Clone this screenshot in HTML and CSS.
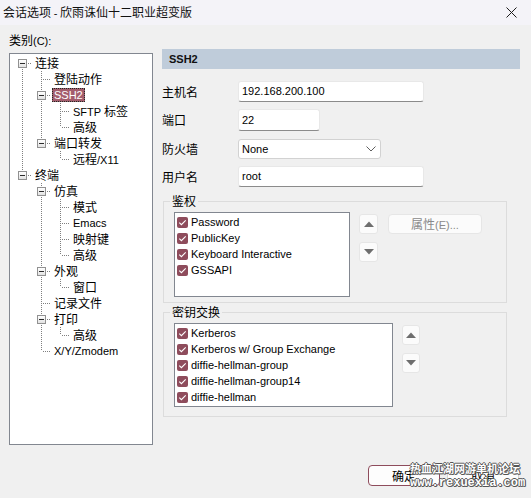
FILE: index.html
```html
<!DOCTYPE html>
<html lang="zh-CN">
<head>
<meta charset="utf-8">
<title>会话选项</title>
<link rel="stylesheet" href="styles.css">
</head>
<body>
<div class="window">
  <div class="titlebar">
    <span class="title">会话选项 <span class="en">-</span> 欣雨诛仙十二职业超变版</span>
    <svg class="close" width="11" height="11" viewBox="0 0 11 11"><path d="M0.5 0.5 L10.5 10.5 M10.5 0.5 L0.5 10.5" stroke="#1c1c1c" stroke-width="1" fill="none"/></svg>
  </div>
  <div class="main">
    <div class="left">
      <div class="cat-label">类别<span class="en">(C):</span></div>
      <div class="tree">
        <div class="row"><span class="c first"><i class="exp"></i></span><span class="lbl">连接</span></div>
        <div class="row"><span class="c pipe"></span><span class="c tee"></span><span class="lbl">登陆动作</span></div>
        <div class="row"><span class="c pipe"></span><span class="c tee"><i class="exp"></i></span><span class="lbl sel en">SSH2</span></div>
        <div class="row"><span class="c pipe"></span><span class="c pipe"></span><span class="c tee"></span><span class="lbl"><span class="en">SFTP </span>标签</span></div>
        <div class="row"><span class="c pipe"></span><span class="c pipe"></span><span class="c ell"></span><span class="lbl">高级</span></div>
        <div class="row"><span class="c pipe"></span><span class="c ell"><i class="exp"></i></span><span class="lbl">端口转发</span></div>
        <div class="row"><span class="c pipe"></span><span class="c"></span><span class="c ell"></span><span class="lbl">远程<span class="en">/X11</span></span></div>
        <div class="row"><span class="c ell"><i class="exp"></i></span><span class="lbl">终端</span></div>
        <div class="row"><span class="c"></span><span class="c tee"><i class="exp"></i></span><span class="lbl">仿真</span></div>
        <div class="row"><span class="c"></span><span class="c pipe"></span><span class="c tee"></span><span class="lbl">模式</span></div>
        <div class="row"><span class="c"></span><span class="c pipe"></span><span class="c tee"></span><span class="lbl en">Emacs</span></div>
        <div class="row"><span class="c"></span><span class="c pipe"></span><span class="c tee"></span><span class="lbl">映射键</span></div>
        <div class="row"><span class="c"></span><span class="c pipe"></span><span class="c ell"></span><span class="lbl">高级</span></div>
        <div class="row"><span class="c"></span><span class="c tee"><i class="exp"></i></span><span class="lbl">外观</span></div>
        <div class="row"><span class="c"></span><span class="c pipe"></span><span class="c ell"></span><span class="lbl">窗口</span></div>
        <div class="row"><span class="c"></span><span class="c tee"></span><span class="lbl">记录文件</span></div>
        <div class="row"><span class="c"></span><span class="c tee"><i class="exp"></i></span><span class="lbl">打印</span></div>
        <div class="row"><span class="c"></span><span class="c pipe"></span><span class="c ell"></span><span class="lbl">高级</span></div>
        <div class="row"><span class="c"></span><span class="c ell"></span><span class="lbl en">X/Y/Zmodem</span></div>
      </div>
    </div>
    <div class="right">
      <div class="header en">SSH2</div>
      <div class="form-row r1"><span class="flabel">主机名</span><div class="field w-long">192.168.200.100</div></div>
      <div class="form-row r2"><span class="flabel">端口</span><div class="field w-port">22</div></div>
      <div class="form-row r3"><span class="flabel">防火墙</span>
        <div class="combo"><span>None</span>
          <svg width="10" height="6" viewBox="0 0 10 6"><path d="M0.5 0.5 L5 5 L9.5 0.5" stroke="#5f5f5f" stroke-width="1" fill="none"/></svg>
        </div>
      </div>
      <div class="form-row r4"><span class="flabel">用户名</span><div class="field w-long">root</div></div>

      <fieldset class="group g1">
        <legend>鉴权</legend>
        <div class="gbody">
          <div class="list l1">
            <div class="item"><span class="chk"><svg width="11" height="11" viewBox="0 0 11 11"><path d="M2.3 5.6 L4.4 7.7 L8.7 3.3" stroke="#fff" stroke-width="1.1" fill="none"/></svg></span>Password</div>
            <div class="item"><span class="chk"><svg width="11" height="11" viewBox="0 0 11 11"><path d="M2.3 5.6 L4.4 7.7 L8.7 3.3" stroke="#fff" stroke-width="1.1" fill="none"/></svg></span>PublicKey</div>
            <div class="item"><span class="chk"><svg width="11" height="11" viewBox="0 0 11 11"><path d="M2.3 5.6 L4.4 7.7 L8.7 3.3" stroke="#fff" stroke-width="1.1" fill="none"/></svg></span>Keyboard Interactive</div>
            <div class="item"><span class="chk"><svg width="11" height="11" viewBox="0 0 11 11"><path d="M2.3 5.6 L4.4 7.7 L8.7 3.3" stroke="#fff" stroke-width="1.1" fill="none"/></svg></span>GSSAPI</div>
          </div>
          <div class="arrows">
            <div class="abtn"><svg width="10" height="6" viewBox="0 0 10 6"><path d="M0 6 L5 0.5 L10 6 Z" fill="#6e6e6e"/></svg></div>
            <div class="abtn"><svg width="10" height="6" viewBox="0 0 10 6"><path d="M0 0 L5 5.5 L10 0 Z" fill="#6e6e6e"/></svg></div>
          </div>
          <div class="prop">属性<span class="en">(E)...</span></div>
        </div>
      </fieldset>

      <fieldset class="group g2">
        <legend>密钥交换</legend>
        <div class="gbody">
          <div class="list l2">
            <div class="item"><span class="chk"><svg width="11" height="11" viewBox="0 0 11 11"><path d="M2.3 5.6 L4.4 7.7 L8.7 3.3" stroke="#fff" stroke-width="1.1" fill="none"/></svg></span>Kerberos</div>
            <div class="item"><span class="chk"><svg width="11" height="11" viewBox="0 0 11 11"><path d="M2.3 5.6 L4.4 7.7 L8.7 3.3" stroke="#fff" stroke-width="1.1" fill="none"/></svg></span>Kerberos w/ Group Exchange</div>
            <div class="item"><span class="chk"><svg width="11" height="11" viewBox="0 0 11 11"><path d="M2.3 5.6 L4.4 7.7 L8.7 3.3" stroke="#fff" stroke-width="1.1" fill="none"/></svg></span>diffie-hellman-group</div>
            <div class="item"><span class="chk"><svg width="11" height="11" viewBox="0 0 11 11"><path d="M2.3 5.6 L4.4 7.7 L8.7 3.3" stroke="#fff" stroke-width="1.1" fill="none"/></svg></span>diffie-hellman-group14</div>
            <div class="item"><span class="chk"><svg width="11" height="11" viewBox="0 0 11 11"><path d="M2.3 5.6 L4.4 7.7 L8.7 3.3" stroke="#fff" stroke-width="1.1" fill="none"/></svg></span>diffie-hellman</div>
          </div>
          <div class="arrows a2">
            <div class="abtn"><svg width="10" height="6" viewBox="0 0 10 6"><path d="M0 6 L5 0.5 L10 6 Z" fill="#6e6e6e"/></svg></div>
            <div class="abtn"><svg width="10" height="6" viewBox="0 0 10 6"><path d="M0 0 L5 5.5 L10 0 Z" fill="#6e6e6e"/></svg></div>
          </div>
        </div>
      </fieldset>
    </div>
  </div>
  <div class="footer">
    <div class="btn default">确定</div>
    <div class="btn">取消</div>
  </div>
  <div class="watermark">
    <div class="wm1">热血江湖网游单机论坛</div>
    <div class="wm2">www.rexuexia.com</div>
  </div>
</div>
</body>
</html>
```

FILE: styles.css
```css
* { box-sizing: border-box; }
html, body { margin: 0; padding: 0; }
body {
  width: 531px;
  height: 498px;
  overflow: hidden;
  background: #f0f0f0;
  font-family: "Noto Sans CJK SC", "Noto Sans", sans-serif;
  font-size: 12px;
  color: #000;
}
.en { font-family: "Liberation Sans", Arial, sans-serif; font-size: 11px; }
.window { position: relative; width: 531px; height: 498px; }

.titlebar {
  height: 25px;
  background: #f4f3f8;
  display: flex;
  align-items: center;
  justify-content: space-between;
  padding: 0 14px 0 3px;
}
.title { line-height: 16px; color: #111; }
.close { display: block; }

.main { display: flex; padding-left: 9px; }
.left { width: 144px; }
.cat-label { margin-top: 8px; line-height: 14px; height: 14px; }
.tree {
  margin-top: 6px;
  height: 392px;
  background: #fff;
  border: 1px solid #828790;
  padding: 1px 0 0 3px;
}
.row { display: flex; height: 16px; align-items: center; }
.c { flex: none; width: 19px; height: 16px; align-self: stretch; }
.pipe {
  background: repeating-linear-gradient(to bottom, #7f7f7f 0 1px, transparent 1px 2px) 9px 0 / 1px 16px no-repeat;
}
.tee {
  background:
    repeating-linear-gradient(to bottom, #7f7f7f 0 1px, transparent 1px 2px) 9px 0 / 1px 16px no-repeat,
    repeating-linear-gradient(to right, #7f7f7f 0 1px, transparent 1px 2px) 11px 8px / 8px 1px no-repeat;
}
.ell {
  background:
    repeating-linear-gradient(to bottom, #7f7f7f 0 1px, transparent 1px 2px) 9px 0 / 1px 8px no-repeat,
    repeating-linear-gradient(to right, #7f7f7f 0 1px, transparent 1px 2px) 11px 8px / 8px 1px no-repeat;
}
.first {
  background:
    repeating-linear-gradient(to bottom, #7f7f7f 0 1px, transparent 1px 2px) 9px 8px / 1px 8px no-repeat,
    repeating-linear-gradient(to right, #7f7f7f 0 1px, transparent 1px 2px) 11px 8px / 8px 1px no-repeat;
}
.exp {
  display: block;
  width: 9px;
  height: 9px;
  margin: 4px 0 0 5px;
  border: 1px solid #919191;
  background:
    linear-gradient(#2b2b2b, #2b2b2b) center / 5px 1px no-repeat,
    linear-gradient(#ffffff, #e2e2e2);
}
.lbl {
  margin-left: 1px;
  padding: 0 2px;
  height: 14px;
  line-height: 14px;
  white-space: nowrap;
}
.lbl.sel {
  background: #a45d6d;
  color: #fff;
  outline: 1px dotted #1e2a24;
  outline-offset: -1px;
}

.right { margin-left: 9px; width: 358px; }
.header {
  margin-top: 24px;
  height: 20px;
  line-height: 20px;
  background: #bfccda;
  font-weight: bold;
  padding-left: 7px;
  color: #111;
}
.form-row { display: flex; align-items: center; }
.r1 { margin-top: 12px; }
.r2 { margin-top: 7px; }
.r3 { margin-top: 8px; }
.r4 { margin-top: 7px; }
.flabel { width: 76px; line-height: 14px; }
.field, .combo, .list {
  font-family: "Liberation Sans", Arial, sans-serif;
  font-size: 11px;
}
.field {
  height: 21px;
  line-height: 19px;
  background: #fff;
  border: 1px solid #e8e8e8;
  border-bottom-color: #8b8b8b;
  border-radius: 3px;
  padding-left: 3px;
}
.r2 .field { height: 22px; line-height: 20px; }
.w-long { width: 186px; }
.w-port { width: 82px; }
.combo {
  width: 143px;
  height: 20px;
  background: #fff;
  border: 1px solid #d2d2d2;
  border-radius: 3px;
  display: flex;
  align-items: center;
  justify-content: space-between;
  padding: 0 4px 0 3px;
  line-height: 18px;
}
.combo svg { display: block; }

.group {
  margin: 7px 0 0 1px;
  padding: 0 0 5px 0;
  width: 344px;
  border: 1px solid #dcdcdc;
  min-width: 0;
}
.group legend {
  padding: 0 2px;
  margin-left: 6px;
  line-height: 14px;
  height: 14px;
}
.g2 { margin-top: 2px; padding-bottom: 9px; }
.gbody { display: flex; align-items: flex-start; padding: 4px 0 0 10px; }
.list {
  background: #fff;
  border: 1px solid #828790;
  padding: 1px 0 0 2px;
}
.l1 { width: 176px; height: 85px; }
.l2 { width: 219px; height: 84px; }
.item {
  display: flex;
  align-items: center;
  height: 16px;
  line-height: 14px;
  white-space: nowrap;
}
.chk {
  flex: none;
  width: 11px;
  height: 11px;
  margin-right: 3px;
  background: #8e4c5c;
  border-radius: 2px;
}
.chk svg { display: block; }
.arrows {
  margin-left: 9px;
  padding-top: 2px;
  display: flex;
  flex-direction: column;
  gap: 8px;
}
.abtn {
  width: 19px;
  height: 20px;
  background: #fbfbfb;
  border: 1px solid #e6e6e6;
  border-radius: 3px;
  display: flex;
  align-items: center;
  justify-content: center;
}
.abtn svg { display: block; }
.a2 .abtn { width: 18px; }
.prop {
  margin: 2px 0 0 10px;
  width: 94px;
  height: 20px;
  line-height: 18px;
  text-align: center;
  background: #fbfbfb;
  border: 1px solid #e6e6e6;
  border-radius: 4px;
  color: #8a8a8a;
}

.footer {
  display: flex;
  justify-content: flex-end;
  gap: 7px;
  margin-top: 20px;
  padding-right: 12px;
}
.btn {
  width: 72px;
  height: 21px;
  line-height: 19px;
  text-align: center;
  background: #fdfdfd;
  border: 1px solid #d3d3d3;
  border-radius: 4px;
}
.btn.default { border-color: #8e4c5c; }

.watermark {
  position: absolute;
  left: 410px;
  top: 461px;
  color: #fff;
  text-shadow: 1px 0 0 #555, -1px 0 0 #555, 0 1px 0 #555, 0 -1px 0 #555, 1px 1px 0 #777;
  white-space: nowrap;
}
.wm1 { font-size: 11px; line-height: 15px; font-weight: bold; letter-spacing: 0; }
.wm2 { font-family: "Liberation Mono", monospace; font-size: 12px; line-height: 14px; font-weight: bold; }
```
